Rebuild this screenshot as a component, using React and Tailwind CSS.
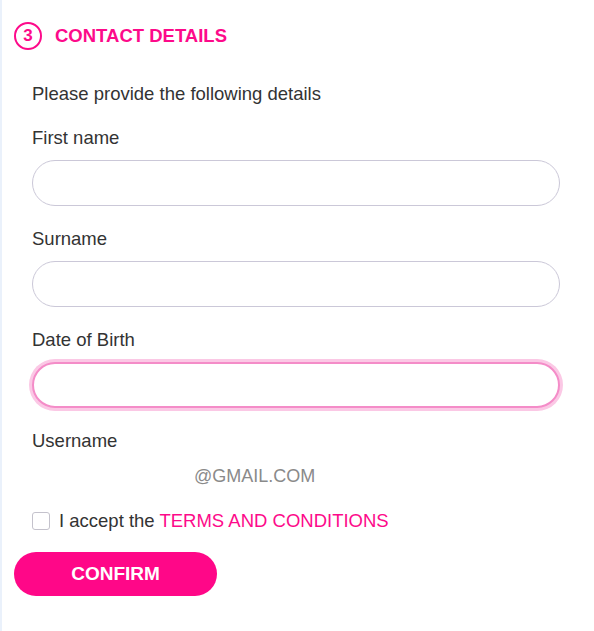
import React from 'react';

const Field = ({ label, focused }) => (
  <div className="flex flex-col">
    <label className="text-[18.5px] leading-6 text-[#333]">{label}</label>
    <input
      type="text"
      className={
        focused
          ? 'mt-[10px] h-[46px] w-[528px] rounded-full border-2 border-[#f48cc8] bg-white px-5 outline-none ring-[3px] ring-[#fbc8e5]'
          : 'mt-[10px] h-[46px] w-[528px] rounded-full border border-[#cbc8d8] bg-white px-5 outline-none'
      }
    />
  </div>
);

const App = () => {
  return (
    <div
      className="min-h-[631px] w-[594px] border-l-2 border-[#eaf1fb] bg-white"
      style={{ fontFamily: '"Liberation Sans", Arial, sans-serif' }}
    >
      <div className="flex items-center pl-3 pt-[22px]">
        <div className="flex h-[28px] w-[28px] items-center justify-center rounded-full border-2 border-[#fd0a8a] text-[17px] font-bold text-[#fd0a8a]">
          3
        </div>
        <h2 className="ml-[13px] text-[18.5px] font-bold text-[#fd0a8a]">CONTACT DETAILS</h2>
      </div>

      <div className="pl-[30px]">
        <p className="mt-[32px] text-[18.5px] leading-6 text-[#333]">Please provide the following details</p>

        <div className="mt-[20px] flex flex-col gap-[21px]">
          <Field label="First name" />
          <Field label="Surname" />
          <Field label="Date of Birth" focused />
          <div className="flex flex-col">
            <label className="text-[18.5px] leading-6 text-[#333]">Username</label>
            <div className="mt-[10px] flex items-center">
              <span className="ml-[162px] text-[18px] text-[#8a8a8a]">@GMAIL.COM</span>
            </div>
          </div>
        </div>

        <div className="mt-[19px] flex items-center leading-6">
          <input
            type="checkbox"
            className="h-[18px] w-[18px] appearance-none rounded-[3px] border border-[#c4c2cc] bg-white"
          />
          <span className="ml-[9px] text-[18.5px] leading-6 text-[#333]">
            I accept the <span className="text-[#fd0a8a]">TERMS AND CONDITIONS</span>
          </span>
        </div>
      </div>

      <div className="pl-3 pt-[19px]">
        <button className="h-[44px] w-[203px] rounded-full bg-[#ff0788] text-[19px] font-bold text-white">
          CONFIRM
        </button>
      </div>
    </div>
  );
};

export default App;
